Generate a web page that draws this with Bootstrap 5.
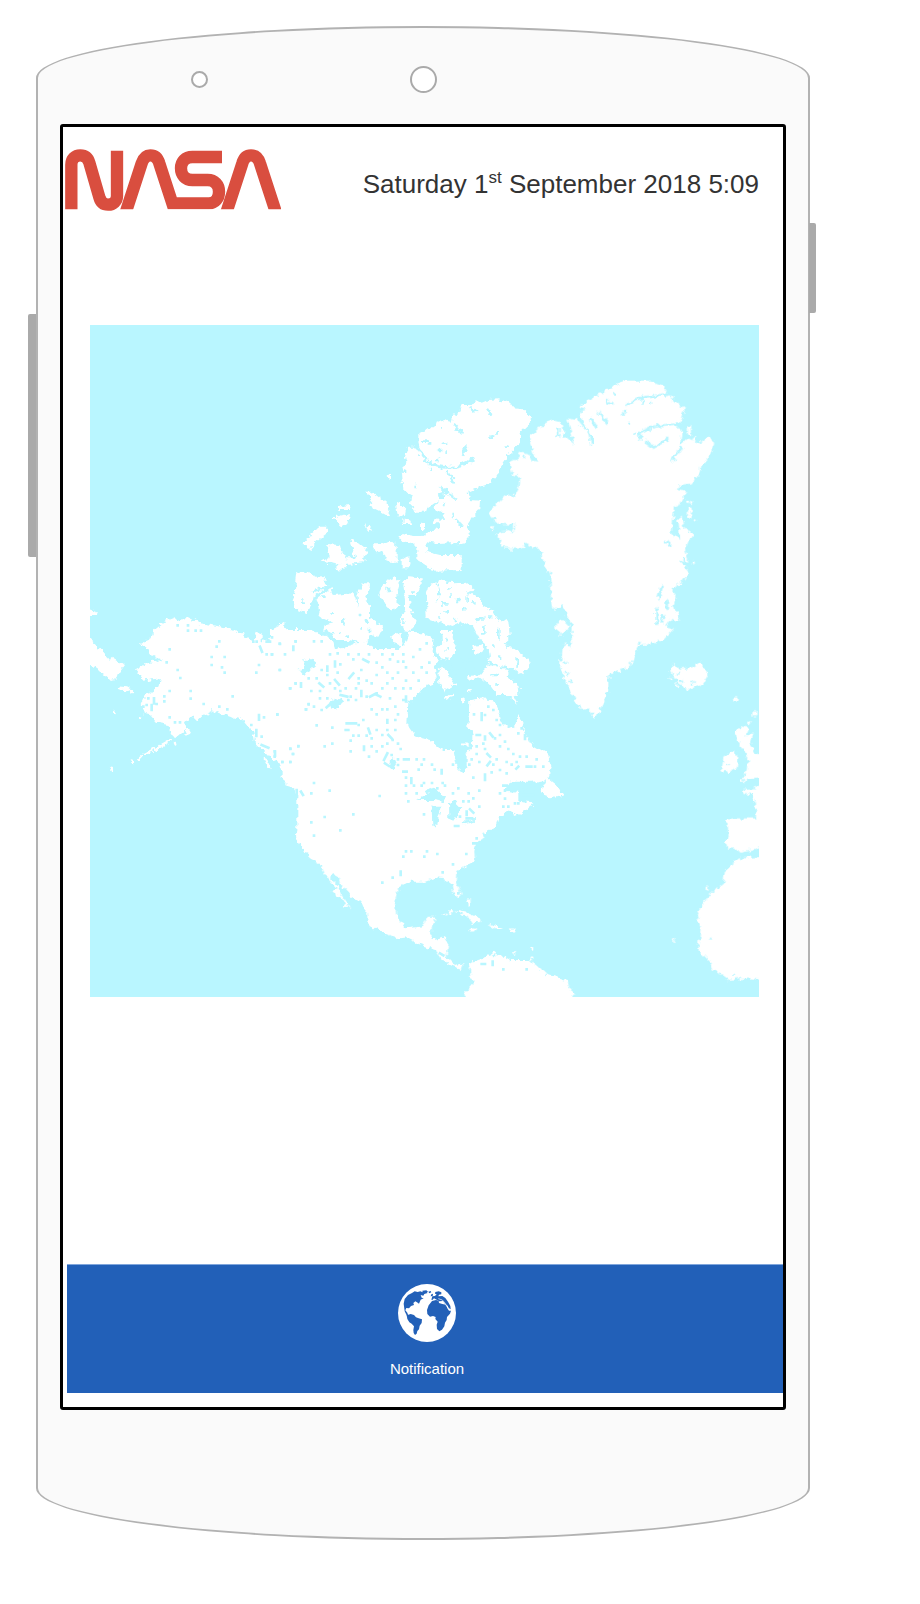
<!DOCTYPE html>
<html lang="en">
<head>
<meta charset="utf-8">
<meta name="viewport" content="width=device-width, initial-scale=1">
<title>NASA notifications</title>
<link href="https://cdn.jsdelivr.net/npm/bootstrap@5.3.0/dist/css/bootstrap.min.css" rel="stylesheet">
<style>
  body { font-family: "Liberation Sans", Arial, sans-serif; background: #fff; }
  .stage { padding: 26px 110px 64px 36px; }
  .phone { background: #fafafa; border: 2px solid #b2b2b2; border-radius: 50% / 52px; padding: 0 22px 128px; }
  .side-key { background: #aaa; width: 8px; }
  .key-left { left: -10px; top: 286px; height: 243px; border-radius: 2px 0 0 2px; }
  .key-right { right: -8px; top: 195px; height: 90px; width: 7px; border-radius: 0 2px 2px 0; }
  .sensors { height: 96px; padding-top: 6px; grid-template-columns: 1fr auto 1fr; }
  .ring { border: 2px solid #aaa; border-radius: 50%; background: #fff; }
  .ring-s { width: 17px; height: 17px; margin-left: 131px; }
  .ring-l { width: 27px; height: 27px; }
  .screen { border: 3px solid #000; border-radius: 3px; }
  .topbar { padding: 22px 24px 0 2px; }
  .logo { width: 216px; height: 62px; }
  .stamp { font-size: 26px; line-height: 30px; color: #333; padding-top: 8px; }
  .stamp sup { font-size: 17px; top: -10px; vertical-align: baseline; }
  .map-wrap { padding: 114px 24px 267px 27px; }
  .tabbar { background: #2260b8; margin: 0 0 14px 4px; border-top: 1px solid #80a6dc; height: 129px; }
  .tab { color: #fff; font-size: 15px; line-height: 18px; gap: 18px; padding: 19px 0 0 4px; }
  .globe { width: 58px; height: 58px; }
  .land path { fill: #fff; }
  .land .lake { fill: #b9f6ff; }
  .land .sea { fill: none; stroke: #b9f6ff; stroke-width: 8; }
  .land .dots { fill: none; stroke: #b9f6ff; stroke-width: 8; stroke-linecap: square; }
  .land .isles { fill: none; stroke: #fff; stroke-width: 9; stroke-linecap: round; }
</style>
</head>
<body>
<main class="stage">
  <div class="phone position-relative">
    <span class="side-key key-left position-absolute"></span>
    <span class="side-key key-right position-absolute"></span>
    <div class="sensors d-grid align-items-center">
      <span class="ring ring-s"></span><span class="ring ring-l"></span><span></span>
    </div>
    <section class="screen bg-white">
      <header class="topbar d-flex justify-content-between align-items-start">
        <svg class="logo flex-shrink-0" viewBox="135 417 648 186" role="img" aria-label="NASA">
          <clipPath id="base"><path d="M100 400H800V598H100Z"/></clipPath>
          <g fill="none" stroke="#d94e3f" stroke-width="37">
            <path d="M154 598V464C154 447 165 436 181 436Q202 436 208 458L238 562Q244 584 264 584C280 584 291 573 291 558V422"/>
            <g clip-path="url(#base)">
              <path d="M314 617L365 460Q373 436 391 436Q411 436 418 460L457 580H566C585 580 597 565 597 545C597 525 584 510 563 510H517C496 510 483 495 483 475C483 455 496 441 517 441H606"/>
              <path d="M616 617L667 460Q674 436 693 436Q713 436 720 460L771 617"/>
            </g>
          </g>
        </svg>
        <div class="stamp d-flex align-self-center text-nowrap"><time datetime="2018-09-01T05:09">Saturday 1<sup>st</sup> September 2018 5:09</time></div>
      </header>
      <div class="map-wrap">
        <svg class="d-block w-100" viewBox="90 325 669 672" role="img" aria-label="Map of North America">
          <defs>
            <filter id="rough" x="0" y="0" width="100%" height="100%">
              <feTurbulence type="fractalNoise" baseFrequency=".2" numOctaves="2" seed="4"/>
              <feDisplacementMap in="SourceGraphic" scale="7" xChannelSelector="R" yChannelSelector="G"/>
            </filter>
          </defs>
          <path fill="#b9f6ff" d="M90 325H759V997H90Z"/>
          <g class="land">
            <g filter="url(#rough)">
            <!-- Ellesmere and the Queen Elizabeth Islands -->
            <g transform="translate(280 380) scale(.33333)">
              <path d="M415 185V165L430 158 445 145 465 145 470 128 490 120 515 125 520 105 535 100 545 75 575 75 590 58 605 68 625 60 655 58 690 68 700 82 725 85 745 105 758 122 735 145 720 160V185L700 210 680 235 660 265 645 290 620 315 590 325 565 335 570 360 600 362 598 390 580 410 560 440 570 470 550 495 520 495V488L435 492 440 515 480 525H545V570L455 572 445 560 412 540V505L400 490 360 480 365 462 400 468H430L480 440V430H455L460 418 495 420 490 400 460 385 475 360 445 380 440 395H405L390 370 395 345 370 330 365 270 380 250 375 230 385 200H405L425 225Z"/>
              <path d="M320 290l10-10v20zM255 335h20l45 35 10 42-30-17-32-15 12-18zM345 370l15 2 20 18-2 18-28-3zM365 418l30 4v10h-25zM255 430l15 10 10 15-15-3zM423 428h12v20h-12zM170 390l15-12 25-3 2 15zM160 412l30-7 20-3-5 28-20 12zM68 495l27-35 25-20h22l-2 20-30 25-22 25zM145 492l30 3 25 40h25l-5-20-10-35 15 2 35 28-10 40-50 5-15 17-20-2 15-15-55-10 25-15-10-25zM275 490h25l30-8 20 18v45h-30l-10-30-20 5zM365 540l15-10 15 15-5 20h-25z"/>
              <path class="sea" d="M415 208Q445 262 500 262T582 232M560 200l-15 25M545 440l-18-25M475 345l25-10-20-15M500 275l25 35M520 130l25 30M570 80l20 18M620 85l15 25M440 488l30 5 70-3"/>
              <path class="dots" d="M485 145h0M530 148h0M495 188h0M480 210h0M500 218h0M472 240h0M450 255h0M632 170h10M650 160h0M678 200h0M480 350h15M510 345l15 10M490 375h0M518 405h0M410 318h0M372 272h0M600 340h0M455 270h0M430 185h10M450 190h0"/>
            </g>
            <!-- Banks, Victoria, Baffin and neighbours -->
            <g transform="translate(280 560) scale(.33333)">
              <path d="M52 38H85L110 50 130 48 142 78 120 95 98 110 92 135 75 158 52 150 38 125 45 90ZM110 115L150 85 160 105 220 100 235 140 232 100 250 70H270L268 90 255 110 270 140V175L310 200 295 230 270 225 260 250 235 245 210 240H170L160 220 130 210 135 195 165 190 115 170 120 150ZM298 100L315 65 345 52 358 62 350 90 358 140 335 152 310 120ZM370 75L380 52 425 55V75L410 105H385L390 140 395 165 410 185 395 215 370 210 360 185 375 150V120Z"/>
              <path d="M438 110L445 80 480 60 520 70 560 68 585 90 560 98 600 110 610 140 640 155 645 175 685 185 690 230 670 250 700 265 745 295 750 310 725 345 690 320 680 350 715 375 718 400 700 410 715 435 680 405H650L625 370 600 350 565 362V348L600 345 620 320 630 290 625 260 600 240 580 200 550 185 520 198 480 190 440 175Z"/>
              <path d="M580 258l20-3 10 13-25 17zM485 210h30l5 30 10 30-20 30-30-5-10-25 20-20zM475 330l15-10 30 45-5 13-25 14-12-22zM500 415l20-15 2 12zM330 230l15-12 20 7 3 35-18-5zM0 185l15 10 0 25h70l20 10 35-3 20 20 5 20 60-10 25-10 30 20h75l20-15 10-35 30 5 25 20-5 25 15 30-5 30-20 60H0z"/>
              <path class="dots" d="M70 125h0M100 95l20-8M130 110h0M155 160h0M190 180v15M240 165h0M258 182h0M180 215h0M200 230h0M245 205h0M270 210h0M320 90h12M350 110h0M400 95h0M370 185h0M470 75h0M478 90v15M470 120h0M505 85h0M515 110h0M490 130h12M530 120h10M560 110v12M503 157h0M480 170h0M525 180h0M550 145h0M580 130h0M590 180l20-5M610 200v20M630 170h0M655 210v25M640 260h0M660 290h0M680 260h0M630 310l18 8M665 320l30 5M710 300v22M635 345h15M650 370h0M500 240h0M500 265h0M520 335h0"/>
            </g>
            <!-- Alaska, the Aleutians and eastern Siberia -->
            <g transform="translate(80 590) scale(.33333)">
              <path d="M180 160L215 145 220 120 250 95 285 82 300 95 325 82 360 100 440 112 485 130 520 155 530 125 545 130V155L570 140 590 115 605 98 625 120H700V640L660 625 645 600 615 575 605 525 580 512 550 480 525 455 520 425 490 390 450 380 395 360 385 380 370 372 350 392 340 375 315 400 320 415 285 445 275 440 265 405 230 398 210 375 190 370 182 345 195 315 235 290 240 265 190 272 165 240 205 218 250 210 210 195 205 180Z"/>
              <path d="M325 412l10 18-25 10zM20 142L65 180 90 210 95 200 135 225 120 245 105 268 90 270 60 245 45 235 20 225ZM20 55L50 66 48 78H20Z"/>
              <path class="isles" d="M270 452l-35 20-40 20M183 500l-8 8M158 515h0M95 540h0M103 366h0M285 460h0M178 380h0M118 294l22 2 12 7M555 508l12 24"/>
            </g>
            <!-- Canada with Hudson Bay -->
            <g transform="translate(270 620) scale(.33333)">
              <path d="M0 30L40 10 50 30 100 32 140 40 170 50 190 65 195 90 240 85 250 70 290 68 310 90 400 95 410 80 430 40H460L490 60 485 95 500 120 495 150 500 175 490 190 455 205 440 225 415 245 412 315 435 348 480 360 520 390H550L560 440 580 460 590 440V400L605 380 608 340 595 320 598 240 640 235 680 250 690 300 715 325 735 320 745 285 760 320 780 370 830 400 845 440 835 475 860 495 880 525 850 535 810 520 830 480 790 485H720L700 510 745 520V545L790 550 740 590 715 570 690 590 680 620 645 635 620 670 610 700H105L82 655V505L50 495 35 470V435L0 410Z"/>
              <path class="isles" d="M530 235l15-5M580 240h0M598 210h0M580 372h12M540 185l15 10"/>
              <path class="lake" d="M98 122l22-7 22 15-20 17-18 23-16-20 15-7zM178 247l22-12 17 5-5 15-27 15zM355 425l15-12 10 24-10 14zM438 540l32-15 5-17 18-5 32 32-5 10-30-5zM488 560h24l-2 15-8 35-12 8zM537 550l18-8 5 15 17 8-12 15-15 22-12-5zM578 605l37-8v8l-34 8z"/>
            </g>
            <!-- United States, Mexico, the Caribbean and South America -->
            <g transform="translate(270 780) scale(.33333)">
              <path d="M82 150V175L105 200 120 235 155 255 165 285 200 328 185 333 215 355 225 375 245 390 210 340 205 320 180 295 190 282 205 290 215 315 250 355 270 365 295 405V435L345 460 385 475 420 470 440 490 495 510 515 540 545 560 575 570 580 550 555 555 530 530 535 490 520 470 485 478V440L497 410H470L455 440 410 445 380 415 375 370 382 330 410 305H460L490 295 520 297 545 310 550 340 565 355 575 345 560 310 562 275 585 260 615 235 610 190 635 180 645 150ZM570 660L608 615 600 570 595 550 625 540 665 525 700 527 720 540H780L825 580 890 600 902 630 915 640 905 660ZM552 390L590 398 632 416 630 430 605 428 595 410ZM655 431L702 443 680 447Z"/>
              <path class="isles" d="M526 402h0M542 394v8M597 362v10M603 450h10M722 450h10M785 505h0M731 520h0M668 520h0M786 536h0"/>
            </g>
            <!-- Greenland and Iceland -->
            <g transform="translate(480 360) scale(.33333)">
              <path d="M25 460L75 408 105 405 120 375V350L100 348 90 320 92 305 115 295 120 275 145 280 155 305 175 308 160 280 150 230 175 205 215 182 245 190 250 225 285 255 262 175 290 180 325 220 330 255H340V235L310 190 300 155 320 150 295 142 350 105 410 75 435 62H505L550 80 565 105 615 150 605 180 575 192 605 210 600 255 625 235 660 250 690 228 703 250 690 285 660 320V335L635 370 600 375 590 390 620 395 605 430 582 440 575 520 600 540 595 475 605 470 610 500 640 520 625 545 615 570 625 600 600 605 628 635 600 675 570 690 590 710 580 740 600 770 595 785 570 780 555 800 582 805 550 840 475 860 460 905 435 925 385 945V985L370 1025 345 1075 325 1045 305 1050 280 1010 260 970 240 920 245 860 260 850 275 870V790L260 770 250 735 220 750 215 700 210 640 190 605 180 570 135 550 125 562H75L45 520 105 510V495L55 490ZM225 800L245 775 270 800 240 825ZM570 930L585 912 600 930 640 920 660 905 685 940 665 975 625 988 595 970Z"/>
              <path class="sea" d="M440 135l35-20 90-12M430 150v20M482 240l-5-20 45-20 70-8M495 245l25 18 45-25M605 262l-28 40M235 200v32M355 155l25 35M330 175l20 30M380 120l20 15M545 680l-10 40M560 720v30M530 745v50M550 765l-5 25"/>
              <path class="dots" d="M485 127h0M510 127h0M455 127h0M448 190h0M462 220h0M372 95h0M405 103h0M132 290h0M92 512h0M560 545l10 10M600 440h0M612 600h0M478 850h0M516 850h0M262 940h0M270 965h0M255 905h0M605 965h0M637 970h0M595 940h0"/>
              <path class="isles" d="M628 205v18M642 238h0M623 427h0M636 427h0M628 450v18M643 482h0M640 608h0M37 505h0M92 568h0M573 953h0M588 977h0M760 1017h12M825 1055v10M809 1088h0M785 1106h15"/>
            </g>
            <!-- British Isles, Iberia and West Africa -->
            <g transform="translate(640 640) scale(.33333)">
              <path d="M300 260L325 265 320 285H340L330 315 350 345H370V410L310 418 320 390 325 350 310 330 290 300 285 280ZM250 350L280 332 295 350 290 385 260 400 247 385ZM370 440V615L340 628 300 635 280 625H262L258 600 265 580 262 540 275 535H348V490L335 465 310 462V450L345 448V435ZM370 650L300 655 255 690 250 730 200 770 170 825 185 870 175 930 215 970 220 990 265 1020 330 1015 370 1020Z"/>
              <path class="isles" d="M204 744h0M100 901h0M305 421h0"/>
              <path class="dots" d="M265 374h0M211 894h0M281 1003h0M300 330h0M290 340h0"/>
            </g>
            </g>
            <!-- Lakes -->
            <g transform="translate(80 590) scale(.33333)">
              <path class="dots" d="M293 106h0M324 106h0M324 122h0M347 122h0M363 122h0M269 178h0M418 154h0M410 170h0M395 201h0M434 201h0M395 225h0M426 232h0M434 248h0M293 240h0M301 264h0M222 200h0M260 217h0M269 303h0M332 303h0M332 326h0M253 319h0M253 334h0M458 319h0M371 342h0M418 350h0M442 358h0M222 325v15M205 325h0M200 345h0M215 345v15M190 350h0M230 342h0M269 382h0M285 397h0M300 397h0M537 225h0M529 248h0M600 240h0M600 162h0M560 193h0M576 193h0M530 155h0M540 170l6 15M560 155h10M520 155h0M576 142h0M640 170v10M647 154h0M630 295h0M647 280h0M615 193h0M592 374h0M537 375v14M552 382h0M514 405h0M529 420v18M545 440h0M545 465l20 8M585 485v12M631 476h0M655 468h0M639 492h0M631 516h0M607 516h0M678 358h0M686 343h0M565 150h0"/>
            </g>
            <g transform="translate(270 620) scale(.33333)">
              <path class="dots" d="M170 262l15-14M212 225l20 5M345 430l12 8M400 455h10M355 345l10 10M300 230l15-8 16 8M470 515l10-6M555 618h10M515 450v10M230 310h28M300 340l-5-14M755 512l15-8M775 500l20-5M760 525h30M770 515h20M540 130l5 20M560 155l20-10M550 165l15 8M575 120l15 10M590 145h20M555 110v12M600 120h8"/>
              <path class="dots" d="M29 71h0M29 150h0M6 103h0M77 64h0M132 64h0M155 64h0M61 205h0M22 283h0M93 190v10M77 190h0M116 175h0M140 175h0M155 150h0M172 140v12M172 165h0M148 190l12 10M124 213h0M150 213h0M180 190h0M195 180l12 14M203 158h0M211 133h0M195 125v14M180 103h0M203 100h0M235 103h0M250 118h0M266 103h0M280 118l15 8M297 103h0M320 128h0M337 103h0M360 118h0M368 103h0M384 125h0M400 103h0M400 125h0M408 142h0M430 111h0M450 88h0M470 70h0M250 160l-12 14M274 150h0M290 182h0M266 190h0M266 175h0M305 190h0M320 165h0M337 142h0M352 158h0M368 175h0M384 158h0M408 182h0M430 158h0M455 142h0M470 158h0M478 128h0M446 182h0M422 205h0M400 205h0M376 205h0M352 190h0M337 205h0M320 220h0M290 230h0M274 213v15M258 205h0M242 230h0M227 205h0M211 213h0M195 205h0M172 235h0M150 235h0M116 252h0M108 268h0M132 260h0M155 270h0M203 260h0M235 240h0M258 240h0M305 268h0M320 283h0M337 268h0M352 268h0M352 300v8M376 300h0M384 283h0M376 260h0M400 240h0M408 230v14M360 235h0M280 300h0M266 315h0M250 347h0M235 330h0M242 362h0M227 330h0M266 347h0M187 323h0M140 316h0M187 371h0M164 379h0M242 394h0M85 379h0M61 387h0M69 402h0M61 426h0M37 426h0M14 394h0M14 410h0M282 380v10M297 410h0M305 379h0M320 394h0M337 379h0M352 371h0M368 360h0M384 371h0M392 387h0M376 330h0M352 330h0M337 345h0M320 330h0M305 355h0M290 347h0M352 400l-10 20M365 405h0M384 418h0M402 418h14M384 435h0M440 418h0M462 418h0M455 434h0M446 449h0M486 434h0M494 449h0M408 473h0M424 475v14M462 489h0M455 497h0M408 497h0M408 520h0M432 497h0M415 544h0M440 520h0M462 583h0M486 489h0M502 505h0M518 489h0M525 497h0M549 520h0M565 505h0M329 528h0M250 583h0M211 631h0M132 489h0M179 512h0M124 520h0M93 515l6 10M80 510v16M124 607h0M132 647h0M164 591h0M549 434h0M580 544h0M596 520h0M596 544h0M610 535h0M628 560h0M628 512h0M600 568l10 10M590 575v10M570 590h0M590 595h16M645 480v-16M610 473h0M598 434h0M605 418h0M620 402h0M628 426h0M652 402l8 8M660 426l-8 10M670 434h0M680 418h0M645 387h0M620 379h0M640 371h0M620 345h10M645 350v8M660 340l8 10M675 355h0M690 345h0M705 365h0M690 379h0M715 387h0M730 402h0M710 426h0M725 434h0M745 440l-6 6M770 440h14M795 440h0M800 418h0M820 440h0M770 410h0M750 410h0M740 426h0M635 280v20M612 283h0M655 260h0M670 270h0M645 285h0M680 300h0M690 315h0M710 460h0M690 450h0M665 457h0M700 497h10M730 490h12M690 520h0M705 512h0M705 536h0M700 560h0M715 560h0M735 550h0M745 550h0M765 345v12M745 340h0M755 325h0M620 655h0M610 670h14"/>
            </g>
            <g transform="translate(270 780) scale(.33333)">
              <path class="dots" d="M408 214h0M424 214h0M400 230h0M471 214h0M463 230h0M502 222h0M589 222h0M549 253h0M518 277h0M392 275v10M368 293h0M337 308h0M565 340h0M510 520l10 6M700 568h0M770 568h0M635 552h10M668 545v10"/>
            </g>
          </g>
        </svg>
      </div>
      <nav class="tabbar" aria-label="Main">
        <a class="tab d-flex flex-column align-items-center text-decoration-none" href="#notification">
          <svg class="globe" viewBox="84 101 174 174" aria-hidden="true">
            <circle cx="171" cy="188" r="87" fill="#fff"/>
            <g fill="#2260b8">
              <path d="M101 160l3-14 10-12 12-6 8-5 9 2 8-2 7 3 9-2 6 4-10 3-3 5-8-2 3 8 6 2-9 4-5 12-6-4-5-3-6 5 2 6-9 3-6 7-8-1-3 7 6 7 3 9 7 3-2 4-9-6-7-14zM157 121l12-1 5 4-7 4-9-2zM175 124l7-2 2 4-6 3z"/>
              <path d="M110 195l12-4 10 3 6 7 8 3 10 3-1 11-6 8-2 11-5 5-2 8-5 4-4-6-1-9 2-11-7-8-7-4-6-10z"/>
              <path d="M171 179l5-14 6-8 4-5 12-3 8 2 1 7 10 3 11 2 4 11 5 7 6 0-3 9-9 10-1 9-5 8-2 11-7 10-8 5-7-7-1-13 3-9-7-8 1-6-8-3-9 2-8-8z"/>
              <path d="M184 148l3-10 8-1 5-5-5-2 1-5 10-2 8 3 0 6-7 1-2 5 12-1 9 6 8 11 7 13 1 10-6-3-3-8-8-6-6-8-11 1-8-5-8-4-5 5zM184 132l5-2-1 7-6 1z"/>
            </g>
            <path d="M205 145l12 4 8 9 5 10 10 10" fill="none" stroke="#fff" stroke-width="2"/>
          </svg>
          <span>Notification</span>
        </a>
      </nav>
    </section>
  </div>
</main>
<script src="https://cdn.jsdelivr.net/npm/bootstrap@5.3.0/dist/js/bootstrap.bundle.min.js"></script>
</body>
</html>
